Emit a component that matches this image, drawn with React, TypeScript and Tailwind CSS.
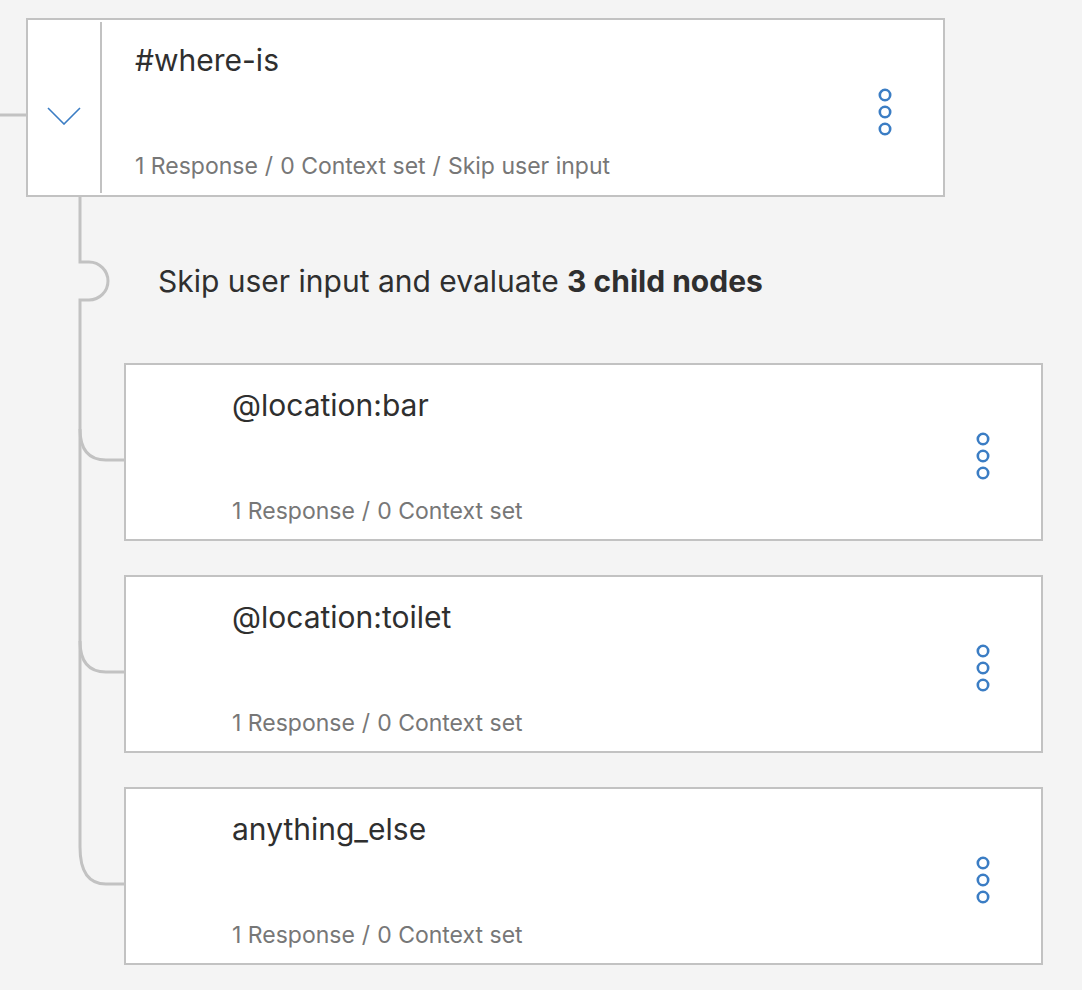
import React from "react";

type Node = {
  title: string;
  meta: string[];
};

const children: Node[] = [
  { title: "@location:bar", meta: ["1 Response", "0 Context set"] },
  { title: "@location:toilet", meta: ["1 Response", "0 Context set"] },
  { title: "anything_else", meta: ["1 Response", "0 Context set"] },
];

// three small blue rings, the node menu
function Kebab() {
  return (
    <svg width="16" height="48" viewBox="0 0 16 48" fill="none">
      <circle cx="8" cy="7" r="5.2" stroke="#3b7dc4" strokeWidth="2.6" />
      <circle cx="8" cy="24" r="5.2" stroke="#3b7dc4" strokeWidth="2.6" />
      <circle cx="8" cy="41" r="5.2" stroke="#3b7dc4" strokeWidth="2.6" />
    </svg>
  );
}

function Meta({ items }: { items: string[] }) {
  return (
    <p className="text-[23px] leading-[28px] text-[#777777]">
      {items.map((m, i) => (
        <span key={m}>
          {i > 0 && <span className="px-[7px]">/</span>}
          {m}
        </span>
      ))}
    </p>
  );
}

function ChildCard({ node }: { node: Node }) {
  return (
    <div className="flex h-[178px] w-[919px] border-2 border-[#c2c2c2] bg-white">
      <div className="flex flex-1 flex-col justify-between pt-[22px] pb-[14px] pl-[106px]">
        <h3 className="text-[30px] leading-[36px] text-[#2f2f2f]">{node.title}</h3>
        <Meta items={node.meta} />
      </div>
      <div className="flex items-center pt-[8px] pr-[50px]">
        <Kebab />
      </div>
    </div>
  );
}

export default function App() {
  return (
    <div
      className="min-h-screen bg-[#f4f4f4] pt-[18px]"
      style={{ fontFamily: 'Inter, "Noto Sans", sans-serif' }}
    >
      {/* parent node */}
      <div className="flex">
        <svg width="26" height="179" className="shrink-0">
          <line x1="0" y1="97" x2="26" y2="97" stroke="#c2c2c2" strokeWidth="3" />
        </svg>
        <div className="flex h-[179px] w-[919px] border-2 border-[#c2c2c2] bg-white">
          <div className="flex py-[2px]">
            <div className="flex w-[72px] items-center justify-center pt-[16px]">
              <svg width="34" height="18" viewBox="0 0 34 18" fill="none">
                <path d="M1 1 L17 17 L33 1" stroke="#3b7dc4" strokeWidth="1.6" />
              </svg>
            </div>
            <div className="w-[2px] bg-[#c2c2c2]" />
          </div>
          <div className="flex flex-1 flex-col justify-between pt-[22px] pb-[15px] pl-[33px]">
            <h3 className="text-[30px] leading-[36px] text-[#2f2f2f]">#where-is</h3>
            <Meta items={["1 Response", "0 Context set", "Skip user input"]} />
          </div>
          <div className="flex items-center pt-[8px] pr-[50px]">
            <Kebab />
          </div>
        </div>
      </div>

      {/* children */}
      <div className="flex">
        <svg width="124" height="768" className="shrink-0" fill="none">
          <path
            d="M80 0 V65 H89 A19 19 0 0 1 89 103 H80 V650 Q80 687 106 687 H124"
            stroke="#c2c2c2"
            strokeWidth="3"
          />
          <path d="M80 232 Q80 263 106 263 H124" stroke="#c2c2c2" strokeWidth="3" />
          <path d="M80 444 Q80 475 106 475 H124" stroke="#c2c2c2" strokeWidth="3" />
        </svg>
        <div className="flex flex-col">
          <div className="flex h-[166px] items-center pt-[2px] pl-[34px]">
            <p className="text-[30px] leading-[36px] text-[#2f2f2f]">
              Skip user input and evaluate <span className="font-bold">3 child nodes</span>
            </p>
          </div>
          <div className="flex flex-col gap-[34px]">
            {children.map((c) => (
              <ChildCard key={c.title} node={c} />
            ))}
          </div>
        </div>
      </div>
    </div>
  );
}
